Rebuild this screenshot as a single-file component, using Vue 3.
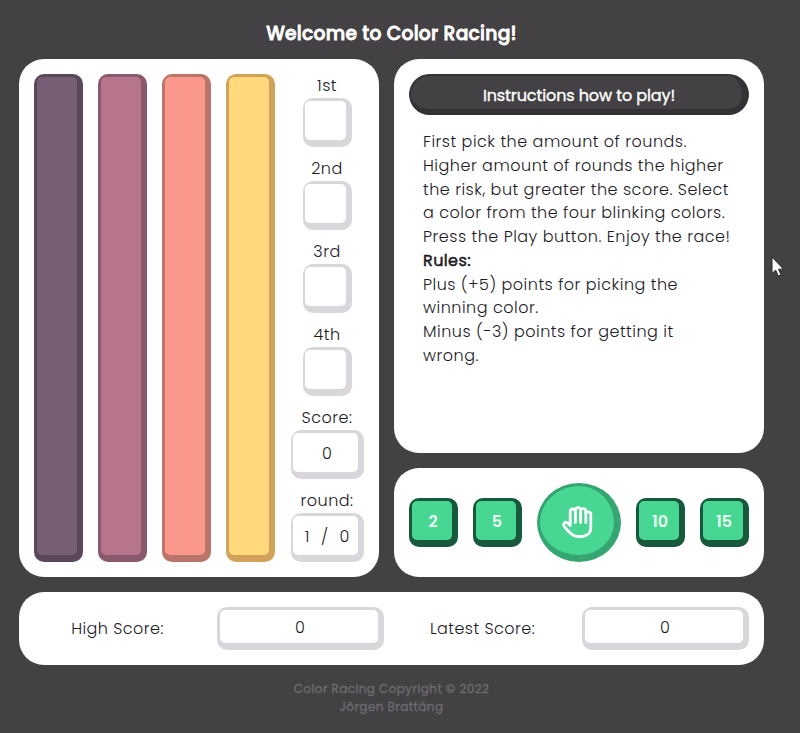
<script setup>
import { ref } from 'vue'

const lanes = ['plum', 'rose', 'coral', 'gold']
const places = ['1st', '2nd', '3rd', '4th']
const score = ref(0)
const round = ref(1)
const total = ref(0)
const highScore = ref(0)
const latestScore = ref(0)
const instructions = [
  'First pick the amount of rounds.',
  'Higher amount of rounds the higher',
  'the risk, but greater the score. Select',
  'a color from the four blinking colors.',
  'Press the Play button. Enjoy the race!',
]
const rules = [
  'Plus (+5) points for picking the',
  'winning color.',
  'Minus (-3) points for getting it',
  'wrong.',
]
</script>

<template>
  <div class="page">
    <h1>Welcome to Color Racing!</h1>
    <main>
      <section class="card race">
        <div v-for="lane in lanes" :key="lane" class="key lane" :class="lane"></div>
        <div class="results">
          <div v-for="place in places" :key="place" class="result">
            <span class="label">{{ place }}</span>
            <div class="key box"></div>
          </div>
          <div class="result">
            <span class="label">Score:</span>
            <div class="key box wide">{{ score }}</div>
          </div>
          <div class="result">
            <span class="label">round:</span>
            <div class="key box wide rounds"><span>{{ round }}</span><span>/</span><span>{{ total }}</span></div>
          </div>
        </div>
      </section>
      <div class="side">
        <section class="card info">
          <h2>Instructions how to play!</h2>
          <div class="copy">
            <div v-for="line in instructions" :key="line">{{ line }}</div>
            <div class="rules">Rules:</div>
            <div v-for="line in rules" :key="line">{{ line }}</div>
          </div>
        </section>
        <section class="card controls">
          <button class="key pick">2</button>
          <button class="key pick">5</button>
          <button class="play" aria-label="Play">
            <svg width="36" height="36" viewBox="0 0 36 36" fill="none" stroke="#fff" stroke-width="2.800" stroke-linecap="round" stroke-linejoin="round">
              <path d="M11.200 18.500V7.600a2.600 2.600 0 0 1 5.200 0V18.500V6.300a2.600 2.600 0 0 1 5.200 0V18.500V7.300a2.600 2.600 0 0 1 5.200 0V18.500V10.300a2.500 2.500 0 0 1 5 0V23.500C31.800 29 28 32.500 22.500 32.500H19C15 32.500 12.500 30.500 9.700 27.500L5.200 22.300C3.400 19.800 6.200 17 8.700 19L11.200 21.500V18.500" />
            </svg>
          </button>
          <button class="key pick">10</button>
          <button class="key pick">15</button>
        </section>
      </div>
      <section class="card scores">
        <div class="score-label">High Score:</div>
        <div class="key total">{{ highScore }}</div>
        <div class="score-label">Latest Score:</div>
        <div class="key total">{{ latestScore }}</div>
      </section>
    </main>
    <footer>
      <div>Color Racing Copyright © 2022</div>
      <div>Jörgen Brattäng</div>
    </footer>
    <svg class="cursor" width="14" height="22" viewBox="0 0 14 22">
      <path d="M1 1V17.500L4.700 14.200L7.300 20L10 18.800L7.500 13.200H12.500Z" fill="#fff" stroke="#29282a" stroke-width="1" />
    </svg>
  </div>
</template>

<style>
body {
  background: #434143;
}
</style>

<style scoped>
.page {
  position: relative;
  box-sizing: border-box;
  width: 783px;
  height: 733px;
  padding: 17px 19px 0;
  font-family: Poppins, Inter, "Liberation Sans", sans-serif;
  font-feature-settings: "cv11";
  font-size: 16px;
  font-weight: 300;
  color: #1c1a1f;
}
.page * {
  box-sizing: border-box;
}
h1 {
  margin: 0;
  height: 42px;
  text-align: center;
  font-size: 18.720px;
  line-height: 33px;
  font-weight: 500;
  letter-spacing: 0.250px;
  -webkit-text-stroke: 0.800px #fff;
  color: #fff;
}
main {
  display: grid;
  grid-template-columns: 360px 370px;
  grid-template-rows: 518px 73px;
  gap: 15px;
  width: 745px;
}
.card {
  background: #fff;
  border-radius: 25px;
  padding: 15px;
}
.key {
  --face: #fff;
  --edge: #d9d7db;
  position: relative;
  isolation: isolate;
  border: 2px solid var(--edge);
  border-width: 2px 6px 7px 2px;
  border-radius: 10px;
  background: var(--edge);
}
.key::before {
  content: "";
  position: absolute;
  z-index: -1;
  inset: 0.500px 0 0 0.500px;
  border-radius: 5px;
  background: var(--face);
}
.race {
  display: flex;
  gap: 15px;
}
.lane {
  width: 49px;
  height: 488px;
}
.plum { --face: #765f75; --edge: #5a4759; }
.rose { --face: #b7748d; --edge: #8b596d; }
.coral { --face: #fa998b; --edge: #bb7469; }
.gold { --face: #ffd97c; --edge: #d2a25a; }
.results {
  flex: 1;
  display: flex;
  flex-direction: column;
  justify-content: space-between;
}
.result {
  display: flex;
  flex-direction: column;
  align-items: center;
}
.label {
  height: 24px;
  line-height: 24px;
  letter-spacing: 0.500px;
}
.box {
  display: flex;
  align-items: center;
  justify-content: center;
  width: 49px;
  height: 49px;
  padding: 2px 0 0 4px;
}
.wide {
  width: 73px;
}
.rounds {
  gap: 11.500px;
}
.side {
  display: flex;
  flex-direction: column;
  gap: 15px;
}
.info {
  height: 394px;
}
h2 {
  margin: 0;
  height: 41px;
  border: 2px solid #343236;
  border-right-width: 7px;
  border-bottom-width: 6px;
  border-radius: 21px;
  background: #434143;
  color: #fff;
  text-align: center;
  font-size: 16px;
  line-height: 39px;
  font-weight: 400;
  letter-spacing: -0.100px;
  -webkit-text-stroke: 0.350px #fff;
  padding-left: 5px;
}
.copy {
  padding: 15px 0 0 14px;
  line-height: 23.760px;
  letter-spacing: 0.500px;
  white-space: nowrap;
}
.rules {
  font-weight: 400;
  letter-spacing: 0.400px;
  -webkit-text-stroke: 0.500px #1c1a1f;
}
.controls {
  display: flex;
  align-items: center;
  gap: 15px;
  height: 109px;
}
button {
  font: inherit;
  padding: 0;
  color: #fff;
}
.pick {
  --face: #47d793;
  --edge: #17593c;
  width: 49px;
  height: 49px;
  padding: 2px 0 0 3px;
  font-weight: 600;
  color: #e9fbf2;
}
.play {
  display: flex;
  align-items: center;
  justify-content: center;
  width: 84px;
  height: 79px;
  border: 3px solid #35a571;
  border-right-width: 7px;
  border-bottom-width: 7px;
  border-radius: 50%;
  background: #47d793;
}
.play svg {
  margin: 2px 0 0;
}
.scores {
  grid-column: 1 / 3;
  display: grid;
  grid-template-columns: 168px 167px 168px 167px;
  justify-content: space-between;
  align-items: center;
}
.score-label {
  padding-right: 1px;
  text-align: center;
  letter-spacing: 0.450px;
}
.total {
  height: 43px;
  padding-left: 3px;
  line-height: 37px;
  text-align: center;
}
footer {
  margin-top: 15px;
  text-align: center;
  font-size: 12px;
  line-height: 18px;
  font-weight: 400;
  -webkit-text-stroke: 0.300px #6e6b72;
  letter-spacing: 0.420px;
  color: #6e6b72;
}
.cursor {
  position: absolute;
  left: 771px;
  top: 256px;
}
</style>
